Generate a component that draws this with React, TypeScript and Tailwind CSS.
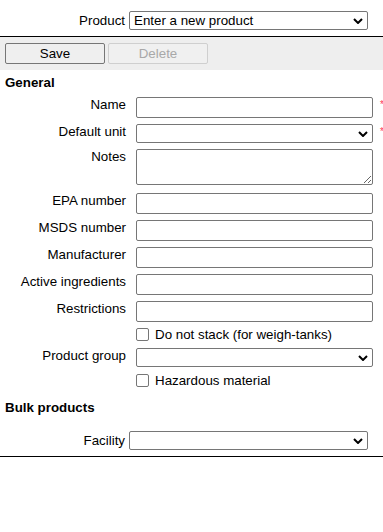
import React from 'react';

const inputCls =
  'block w-[237px] h-[21px] border border-[#767676] rounded-[2px] bg-white px-[2px] text-[13.33px] outline-none';

function Chevron() {
  return (
    <svg
      className="pointer-events-none absolute right-[5px] top-1/2 -translate-y-1/2"
      width="10"
      height="6"
      viewBox="0 0 10 6"
      fill="none"
    >
      <polyline points="1,1 5,5 9,1" stroke="#000" strokeWidth="2" />
    </svg>
  );
}

function Select({ value = '', width = 'w-[237px]' }: { value?: string; width?: string }) {
  return (
    <div className={`relative ${width} h-[19px] shrink-0`}>
      <select
        defaultValue={value}
        className="block w-full h-full appearance-none border border-[#767676] rounded-[2px] bg-white pl-[4px] pr-[20px] text-[13.33px] leading-[15px] outline-none"
      >
        <option value={value}>{value}</option>
      </select>
      <Chevron />
    </div>
  );
}

function Required() {
  return <span className="ml-[7px] text-[10px] leading-[10px] text-[#ff3355] mt-[3px]">*</span>;
}

function FieldRow({ label, className = '', children }: { label: string; className?: string; children: React.ReactNode }) {
  return (
    <div className={`flex items-start ${className}`}>
      <label className="w-[126px] shrink-0 text-right leading-[15px]">{label}</label>
      <div className="ml-[10px] flex items-start">{children}</div>
    </div>
  );
}

function CheckRow({ label, className = '' }: { label: string; className?: string }) {
  return (
    <label className={`flex items-center h-[15px] pl-[136px] leading-[15px] ${className}`}>
      <input
        type="checkbox"
        className="appearance-none w-[13px] h-[13px] border border-[#767676] rounded-[2px] bg-white m-0"
      />
      <span className="ml-[6px]">{label}</span>
    </label>
  );
}

export default function App() {
  return (
    <div className="w-[383px] min-h-[532px] overflow-hidden bg-white text-black text-[13.33px] font-['Liberation_Sans',Arial,sans-serif]">
      {/* Product picker */}
      <div className="flex items-center pt-[11px]">
        <span className="w-[125px] shrink-0 text-right leading-[15px]">Product</span>
        <div className="ml-[4px]">
          <Select value="Enter a new product" width="w-[239px]" />
        </div>
      </div>

      <div className="mt-[6px] h-px bg-black" />

      {/* Toolbar */}
      <div className="h-[33px] bg-[#eeeeee] pt-[6px] pl-[5px] flex gap-[3px]">
        <button className="w-[100px] h-[21px] border border-[#767676] rounded-[2px] bg-[#efefef] text-[13.33px] leading-[15px]">
          Save
        </button>
        <button
          disabled
          className="w-[100px] h-[21px] border border-[#cfcfcf] rounded-[2px] bg-[#f0f0f0] text-[13.33px] leading-[15px] text-[#a8a8a8]"
        >
          Delete
        </button>
      </div>

      {/* General */}
      <div className="pt-[5px] pl-[5px] font-bold leading-[15px]">General</div>

      <FieldRow label="Name" className="mt-[7px]">
        <input type="text" className={inputCls} />
        <Required />
      </FieldRow>

      <FieldRow label="Default unit" className="mt-[6px]">
        <Select />
        <Required />
      </FieldRow>

      <FieldRow label="Notes" className="mt-[6px]">
        <textarea className="block w-[237px] h-[36px] border border-[#767676] rounded-[2px] bg-white p-[2px] text-[13.33px] leading-[15px] outline-none" />
      </FieldRow>

      <FieldRow label="EPA number" className="mt-[8px]">
        <input type="text" className={inputCls} />
      </FieldRow>
      <FieldRow label="MSDS number" className="mt-[6px]">
        <input type="text" className={inputCls} />
      </FieldRow>
      <FieldRow label="Manufacturer" className="mt-[6px]">
        <input type="text" className={inputCls} />
      </FieldRow>
      <FieldRow label="Active ingredients" className="mt-[6px]">
        <input type="text" className={inputCls} />
      </FieldRow>
      <FieldRow label="Restrictions" className="mt-[6px]">
        <input type="text" className={inputCls} />
      </FieldRow>

      <CheckRow label="Do not stack (for weigh-tanks)" className="mt-[5px]" />

      <FieldRow label="Product group" className="mt-[6px]">
        <Select />
      </FieldRow>

      <CheckRow label="Hazardous material" className="mt-[6px]" />

      {/* Bulk products */}
      <div className="mt-[12px] pl-[5px] font-bold leading-[15px]">Bulk products</div>

      <div className="flex items-center mt-[16px]">
        <span className="w-[125px] shrink-0 text-right leading-[15px]">Facility</span>
        <div className="ml-[4px]">
          <Select width="w-[239px]" />
        </div>
      </div>

      <div className="mt-[6px] h-px bg-black" />
    </div>
  );
}
